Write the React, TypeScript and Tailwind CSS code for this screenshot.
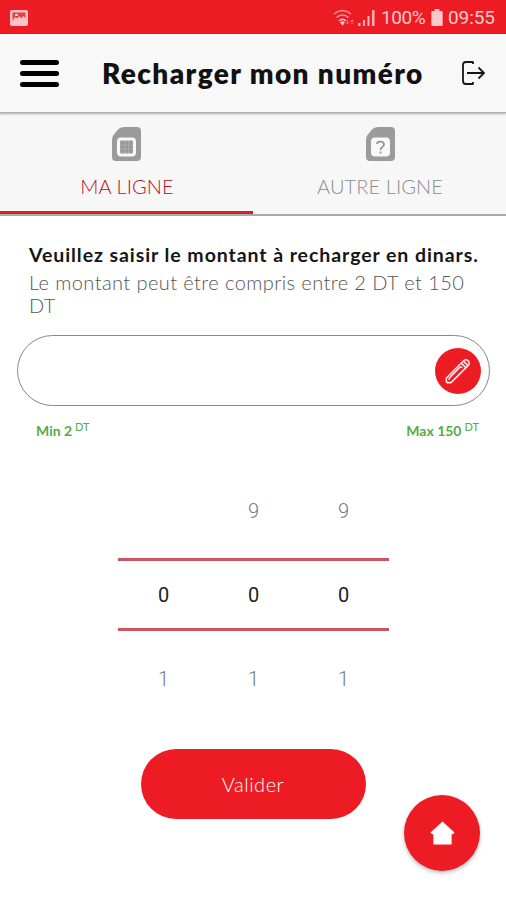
import React from 'react';

const SimIcon: React.FC<{ children: React.ReactNode }> = ({ children }) => (
  <svg width="29" height="34" viewBox="0 0 29 34" aria-hidden="true">
    <path d="M12 0H25Q29 0 29 4V30Q29 34 25 34H4Q0 34 0 30V13Q0 10 1.500 8L6 2.500Q8 0 12 0Z" fill="#9b9b9b" />
    <rect x="5" y="10.500" width="19" height="19" rx="4" fill="#f8f8f8" />
    {children}
  </svg>
);

const StatusBar: React.FC = () => (
  <div className="flex h-[34px] items-center border-b border-[#cf1d22] bg-[#ed1c24] pl-2.5 pr-[11px] pt-0.5 text-[#ffc9cb]">
    <svg width="18" height="16" viewBox="0 0 18 16" aria-hidden="true">
      <rect width="18" height="16" rx="2" fill="#fbc3c6" />
      <path d="M2.500 2.500H15.500V8L13 6L11.500 8.500L9.500 6L7 8.500L5 7L2.500 11Z" fill="#df3f46" />
      <rect x="5" y="4" width="3" height="2" fill="#fbc3c6" />
    </svg>
    <svg className="ml-auto" width="22" height="18" viewBox="0 0 22 18" fill="none" stroke="#f69a9e" strokeWidth="1.500" aria-hidden="true">
      <path d="M1 5Q9.500 -2 18 5" />
      <path d="M3.500 8.500Q9.500 3.500 15.500 8.500" />
      <path d="M6 12Q9.500 8.500 13 12" stroke="#ffc9cb" />
      <path d="M7 13.500L9.500 16.500L12 13.500L9.500 12Z" fill="#ffc9cb" stroke="none" />
      <path d="M14.500 11V15M13 13.500L14.500 15L16 13.500M19 15V11M17.500 12.500L19 11L20.500 12.500" strokeWidth="1" opacity="0.700" />
    </svg>
    <svg className="ml-[3px]" width="18" height="17" viewBox="0 0 18 17" fill="#ffb3b6" aria-hidden="true">
      <path d="M0 14H2.500V17H0ZM5 11H7V17H5ZM9.500 7H11.500V17H9.500ZM14 1H16.500V17H14Z" />
    </svg>
    <span className="ml-[5px] w-[45px] whitespace-nowrap font-['Roboto',sans-serif] text-[19px] leading-none tracking-[-0.4px]">100%</span>
    <svg className="ml-[5px]" width="12" height="17" viewBox="0 0 12 18" fill="#ffc9cb" aria-hidden="true">
      <path d="M3.500 0H8.500V2H11Q12 2 12 3V17Q12 18 11 18H1Q0 18 0 17V3Q0 2 1 2H3.500Z" />
    </svg>
    <span className="ml-[5px] w-[47px] whitespace-nowrap font-['Roboto',sans-serif] text-[19px] leading-none tracking-[-0.1px]">09:55</span>
  </div>
);

const Header: React.FC = () => (
  <header className="relative flex h-[79px] items-center border-b border-[#b0b0b0] bg-[#f8f8f8] pl-5 pr-[21px] shadow-[0_1px_2px_#aaaaaa]">
    <button className="flex w-[39px] flex-col gap-1.5" aria-label="Menu">
      <span className="h-[5px] rounded-full bg-black" />
      <span className="h-[5px] rounded-full bg-black" />
      <span className="h-[5px] rounded-full bg-black" />
    </button>
    <h1 className="ml-[43px] w-[330px] whitespace-nowrap font-['Lato',sans-serif] text-[28px] font-extrabold leading-none tracking-[1.4px] text-[#111111]">
      Recharger mon numéro
    </h1>
    <svg className="ml-auto" width="24" height="26" viewBox="0 0 24 26" fill="none" stroke="#151515" strokeWidth="1.800" aria-hidden="true">
      <path d="M12.500 2H5Q2 2 2 5V21Q2 24 5 24H12.500M12 2V4M12 24V22" />
      <path d="M6 13H23M17.500 7.500L23 13L17.500 18.500" />
    </svg>
  </header>
);

const Tabs: React.FC = () => (
  <nav className="flex h-[103px] border-b-2 border-[#aaaaaa] bg-[#f7f7f7]">
    <button className="flex h-[101px] w-[253px] flex-col items-center border-b-[3px] border-[#d71f27] pt-[14px]">
      <SimIcon>
        <rect x="8" y="13.500" width="13" height="13" fill="#a9a9a9" />
        <path d="M8 16H21M8 20H21M8 24H21M11 13.500V26.500M15 13.500V26.500M19 13.500V26.500" stroke="#8b8b8b" strokeWidth="1" strokeDasharray="2 1" />
      </SimIcon>
      <span className="mt-[13px] whitespace-nowrap pl-px font-['Lato',sans-serif] text-[20px] font-light leading-6 tracking-[0.1px] text-[#b90d1d]">MA LIGNE</span>
    </button>
    <button className="flex w-[253px] flex-col items-center pl-px pt-[14px]">
      <SimIcon>
        <path d="M11 17Q11 14.500 14.500 14.500Q18 14.500 18 17.500Q18 19 16 20.200Q14.500 21 14.500 23M14.500 24.500V26.500" fill="none" stroke="#909090" strokeWidth="1.700" />
      </SimIcon>
      <span className="mt-[13px] whitespace-nowrap font-['Lato',sans-serif] text-[20px] font-light leading-6 tracking-[0.1px] text-[#8c8c8c]">AUTRE LIGNE</span>
    </button>
  </nav>
);

const AmountField: React.FC = () => (
  <div className="ml-[17px] mr-4 mt-[18px] flex h-[71px] items-center justify-end rounded-full border border-[#888888] pr-2">
    <button className="flex size-[46px] items-center justify-center rounded-full bg-[#ed1c24]" aria-label="Modifier">
      <svg width="26" height="26" viewBox="0 0 28 28" fill="none" stroke="#ffe9e9" strokeWidth="1.700" strokeLinejoin="round" aria-hidden="true">
        <path d="M1.500 25.500V21.500L19.500 3.500Q22 0.500 25 3Q27.500 6 24.500 8.500L6.500 26.500H2.500Z" />
        <path d="M17.500 5.500L22.500 10.500M20 3.500L24.500 8M4.500 23.500Q4 21.500 6 20L16 10Q17.500 9 18.500 10.500" />
      </svg>
    </button>
  </div>
);

const columns = [
  { previous: '', current: '0', next: '1' },
  { previous: '9', current: '0', next: '1' },
  { previous: '9', current: '0', next: '1' }
];

const AmountPicker: React.FC = () => (
  <div className="mx-auto mt-[45px] w-[271px] font-['Roboto',sans-serif] text-[20px] font-light text-[#777777]">
    <div className="grid h-[70px] grid-cols-3 pl-px text-center leading-[46px]">
      {columns.map((column, index) => (
        <span key={index}>{column.previous}</span>
      ))}
    </div>
    <div className="grid h-[73px] grid-cols-3 items-center border-y-[3px] border-[#cd555e] pl-px text-center font-normal text-[#222222]">
      {columns.map((column, index) => (
        <span key={index}>{column.current}</span>
      ))}
    </div>
    <div className="grid h-[70px] grid-cols-3 pl-px pt-[33px] text-center">
      {columns.map((column, index) => (
        <span key={index}>{column.next}</span>
      ))}
    </div>
  </div>
);

const App: React.FC = () => {
  return (
    <div className="relative h-[900px] w-[506px] overflow-hidden bg-white font-['Lato',sans-serif]">
      <StatusBar />
      <Header />
      <Tabs />
      <main>
        <div className="pl-[29px] pt-[27px]">
          <p className="whitespace-nowrap text-[19.5px] font-bold leading-6 tracking-[0.93px] text-[#151515]">
            Veuillez saisir le montant à recharger en dinars.
          </p>
          <p className="mt-1 whitespace-nowrap text-[20px] font-light leading-[23px] tracking-[0.42px] text-[#555555]">
            Le montant peut être compris entre 2 DT et 150
            <br />
            DT
          </p>
        </div>
        <AmountField />
        <div className="flex justify-between pl-9 pr-[27px] pt-[13px] text-[14px] font-bold leading-6 text-[#55ad42]">
          <span>Min 2<sup className="ml-[3px] text-[11px] font-normal">DT</sup></span>
          <span>Max 150<sup className="ml-[3px] text-[11px] font-normal">DT</sup></span>
        </div>
        <AmountPicker />
        <button className="mx-auto mt-12 block h-[70px] w-[225px] rounded-full bg-[#ed1c24] text-[20px] font-light tracking-[0.5px] text-white">
          Valider
        </button>
      </main>
      <button className="absolute left-[404px] top-[795px] flex size-[76px] items-center justify-center rounded-full bg-[#ed1c24] shadow-[0_2px_4px_#bbbbbb]" aria-label="Accueil">
        <svg width="25" height="24" viewBox="0 0 26 24" fill="white" aria-hidden="true">
          <path d="M13 0L25.500 11.500L23.500 13.500L22.500 12.500V24H3.500V12.500L2.500 13.500L.5 11.500Z" />
        </svg>
      </button>
    </div>
  );
};

export default App;
